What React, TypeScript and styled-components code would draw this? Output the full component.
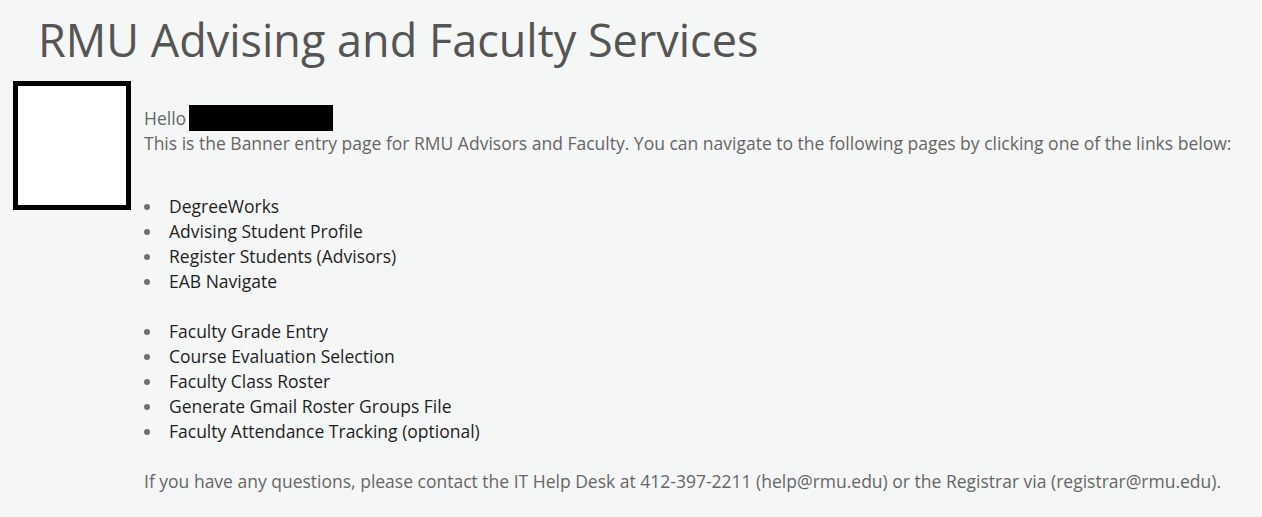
import React from 'react'
import styled, { createGlobalStyle } from 'styled-components';

const GlobalStyle = createGlobalStyle`
    html, body {
        margin: 0;
        padding: 0;
        background-color: #f5f6f6;
        font-family: "Open Sans", "Liberation Sans", sans-serif;
    }
`;

const advisingLinks = [
    'DegreeWorks',
    'Advising Student Profile',
    'Register Students (Advisors)',
    'EAB Navigate',
];

const facultyLinks = [
    'Faculty Grade Entry',
    'Course Evaluation Selection',
    'Faculty Class Roster',
    'Generate Gmail Roster Groups File',
    'Faculty Attendance Tracking (optional)',
];

const App: React.FC = () => {
  return (
    <Page>
        <GlobalStyle />
        <Title>RMU Advising and Faculty Services</Title>
        <Body>
            <Photo />
            <Content>
                <Greeting>
                    Hello <Redacted />
                </Greeting>
                <Intro>
                    This is the Banner entry page for RMU Advisors and Faculty. You can navigate to the following pages by clicking one of the links below:
                </Intro>
                <LinkList>
                    {advisingLinks.map(l => <Item key={l}>{l}</Item>)}
                </LinkList>
                <LinkList>
                    {facultyLinks.map(l => <Item key={l}>{l}</Item>)}
                </LinkList>
                <Footer>
                    If you have any questions, please contact the IT Help Desk at 412-397-2211 (help@rmu.edu) or the Registrar via (registrar@rmu.edu).
                </Footer>
            </Content>
        </Body>
    </Page>
  )
}

export default App;

const Page = styled.div`
    width: 1262px;
    height: 517px;
    overflow: hidden;
    box-sizing: border-box;
    padding-top: 12px;
`;
const Title = styled.h1`
    margin: 0 0 0 38px;
    font-size: 45px;
    font-weight: 400;
    line-height: 56px;
    color: #555555;
`;
const Body = styled.div`
    display: flex;
    align-items: flex-start;
    margin-top: 13px;
    padding-left: 13px;
`;
const Photo = styled.div`
    width: 108px;
    height: 119px;
    background-color: white;
    border: 5px solid black;
    flex-shrink: 0;
`;
const Content = styled.div`
    margin-left: 13px;
    padding-top: 24px;
    font-size: 17.5px;
    line-height: 25px;
    color: #666666;
`;
const Greeting = styled.div`
    display: flex;
    align-items: center;
    gap: 3px;
`;
const Redacted = styled.span`
    display: inline-block;
    width: 144px;
    height: 26px;
    background-color: black;
`;
const Intro = styled.p`
    margin: 0 0 38px 0;
`;
const LinkList = styled.ul`
    margin: 0 0 25px 0;
    padding: 0;
    list-style: none;
    color: #1f1f1f;
`;
const Item = styled.li`
    position: relative;
    padding-left: 25px;
    &::before {
        content: '';
        position: absolute;
        left: 0;
        top: 10px;
        width: 6px;
        height: 6px;
        border-radius: 50%;
        background-color: #6f6f6f;
    }
`;
const Footer = styled.p`
    margin: 0;
`;
